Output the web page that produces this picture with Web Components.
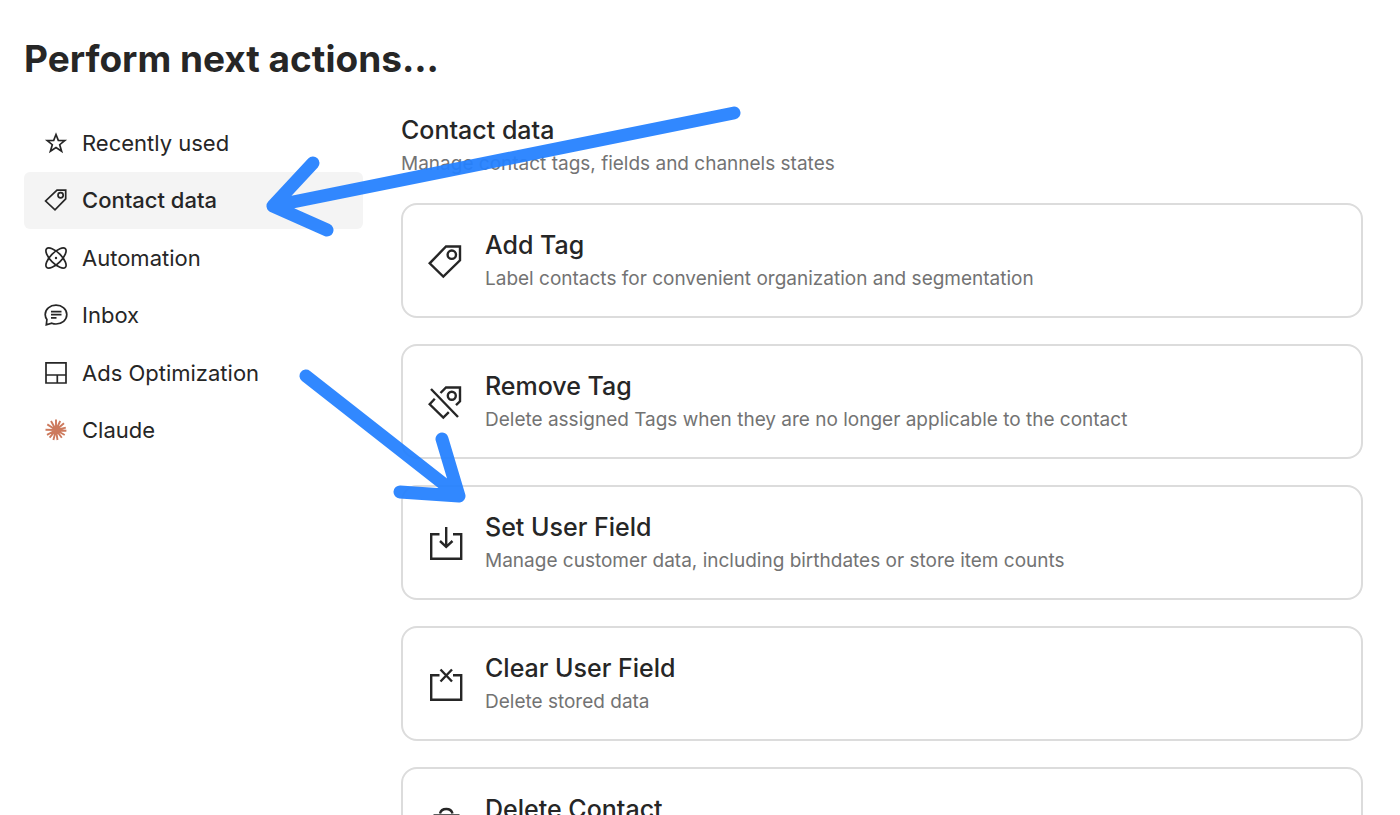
<!DOCTYPE html>
<html lang="en">
<head>
<meta charset="utf-8">
<meta name="viewport" content="width=device-width, initial-scale=1">
<title>Perform next actions</title>
<style>
    body {
        margin: 0;
        background: #fff;
        color: #262626;
        font-family: Inter, "Liberation Sans", sans-serif;
    }
</style>
</head>
<body>
<action-picker heading="Perform next actions...">
    <nav-item slot="nav" icon="star">Recently used</nav-item>
    <nav-item slot="nav" icon="tag" active>Contact data</nav-item>
    <nav-item slot="nav" icon="atom">Automation</nav-item>
    <nav-item slot="nav" icon="chat">Inbox</nav-item>
    <nav-item slot="nav" icon="layout">Ads Optimization</nav-item>
    <nav-item slot="nav" icon="burst">Claude</nav-item>

    <action-group heading="Contact data" text="Manage contact tags, fields and channels states">
        <action-card icon="tag" heading="Add Tag">Label contacts for convenient organization and segmentation</action-card>
        <action-card icon="untag" heading="Remove Tag">Delete assigned Tags when they are no longer applicable to the contact</action-card>
        <action-card icon="set" heading="Set User Field">Manage customer data, including birthdates or store item counts</action-card>
        <action-card icon="clear" heading="Clear User Field">Delete stored data</action-card>
        <action-card icon="trash" heading="Delete Contact"></action-card>
    </action-group>

    <arrow-mark slot="marks" points="M734 113L273 206M313 163L273 206L327 230"></arrow-mark>
    <arrow-mark slot="marks" points="M306 376L459 496M442 439L459 496L400 492"></arrow-mark>
</action-picker>

<script>
"use strict"

// nav icons are drawn on a 24 grid, card icons on a 36 grid
const ICONS = {
    star: '<path d="M12 3.500l2.300 5.900 6.500.200-5.100 4.100 1.900 6.500L12 16.500l-5.600 3.700 1.900-6.500-5.100-4.100 6.500-.200z"/>',
    tag: '<path d="M13 2.200h8.700v8.700L11 21.800 1.600 13z"/><circle cx="16.600" cy="7.200" r="2.600"/>',
    atom: '<ellipse cx="12" cy="12" rx="13.200" ry="5.400" transform="rotate(45 12 12)"/><ellipse cx="12" cy="12" rx="13.200" ry="5.400" transform="rotate(-45 12 12)"/><circle cx="12" cy="12" r="1.200" fill="currentColor" stroke="none"/>',
    chat: '<path d="M2.300 21.800l.6-5.200A9.300 9.300 0 0 1 1.200 11.600C1.200 6.200 6 2.200 12 2.200s10.800 4 10.800 9.400S18 21 12 21c-1.500 0-3-.3-4.200-.8z"/><path d="M7 8.600h10.500M7 11.700h10.500M7 14.800h5.500"/>',
    layout: '<path d="M2 1.800h20v20.200H2zM2 14h20M13.300 14v8"/>',
    burst: '<path stroke="#cd7a5d" stroke-width="1.900" d="M12 12V1.500M12 12l4.200-9M12 12l8-6.800M12 12l9.800-2.400M12 12l10.400.8M12 12l8.700 5M12 12l5.800 7.800M12 12l1.500 10M12 12l-2.600 10M12 12l-6.400 7.700M12 12l-9 4.800M12 12l-10.500-.3M12 12L3.300 6.400M12 12L7 3"/>',
    bigTag: '<path d="M19 3.500h14v13.800L16.300 33.500 2.700 20.300z"/><circle cx="24.800" cy="11.700" r="4.200"/>',
    untag: '<path d="M13.500 9L19 3.500h14v13.800L29 21.200M7.800 14.800l-5.100 5.500 13.600 13.200 5.500-5.400M4 5l27 28"/><circle cx="24.800" cy="11.700" r="4"/>',
    set: '<path d="M12.500 9.200H4.200v24.600h30V9.200H26M19.200 2v19.500M13 16l6.200 5.800L25.500 16"/>',
    clear: '<path d="M12.500 9.200H4.200v24.600h30V9.200H26M13.500 3.500l11.500 12M25 3.500l-11.500 12"/>',
    trash: '<path d="M13 6.500c1.500-6 11-6 12.500 0M6.500 8.500h26M9.500 8.500V33h20V8.500M16 15v12M23 15v12"/>'
};

const icon = (name, box, weight) => `
    <svg viewBox="0 0 ${box} ${box}" width="${box}" height="${box}" fill="none"
         stroke="currentColor" stroke-width="${weight}" aria-hidden="true">${ICONS[name]}</svg>`;

class ActionPicker extends HTMLElement{
    constructor(){
        super();
        this.attachShadow({mode: "open"});
    }

    connectedCallback(){
        this.shadowRoot.innerHTML = `${this.render()} ${this.styles()}`;
    }

    render(){
        return `
            <h1>${this.getAttribute('heading')}</h1>
            <div class="columns">
                <nav aria-label="Action categories"><slot name="nav"></slot></nav>
                <main><slot></slot></main>
            </div>
            <slot name="marks"></slot>
        `
    }

    styles(){
        return `
        <style>
        :host{
            display: block;
            position: relative;
            box-sizing: border-box;
            height: 100vh;
            overflow: hidden;
            padding: 36px 37px 0 24px;
        }

        h1{
            margin: 0 0 32px;
            font-size: 37px;
            font-weight: 700;
            line-height: 46px;
        }

        .columns{
            display: grid;
            grid-template-columns: 339px minmax(0, 1fr);
            align-items: start;
            column-gap: 38px;
        }

        /* six equal rows */
        nav{
            display: grid;
            grid-auto-rows: 1fr;
            min-height: 345px;
        }
        </style>
        `
    }
}

class NavItem extends HTMLElement{
    constructor(){
        super();
        this.attachShadow({mode: "open"});
    }

    connectedCallback(){
        this.shadowRoot.innerHTML = `${this.render()} ${this.styles()}`;
    }

    render(){
        const current = this.hasAttribute('active') ? 'aria-current="true"' : '';
        return `
            <button type="button" ${current}>
                ${icon(this.getAttribute('icon'), 24, 1.7)}
                <span><slot></slot></span>
            </button>
        `
    }

    styles(){
        return `
        <style>
        :host{
            display: flex;
        }

        button{
            flex: 1;
            display: flex;
            align-items: center;
            gap: 14px;
            padding: 0 20px;
            border: 0;
            border-radius: 6px;
            background: none;
            color: inherit;
            font: inherit;
            font-size: 22px;
            line-height: 32px;
            text-align: left;
            cursor: pointer;
        }

        :host([active]) button{
            background: #f4f4f4;
            font-weight: 500;
        }

        svg{
            flex: none;
        }
        </style>
        `
    }
}

class ActionGroup extends HTMLElement{
    constructor(){
        super();
        this.attachShadow({mode: "open"});
    }

    connectedCallback(){
        this.shadowRoot.innerHTML = `${this.render()} ${this.styles()}`;
    }

    render(){
        return `
            <header>
                <h2>${this.getAttribute('heading')}</h2>
                <p>${this.getAttribute('text')}</p>
            </header>
            <slot></slot>
        `
    }

    styles(){
        return `
        <style>
        :host{
            display: flex;
            flex-direction: column;
            gap: 26px;
        }

        h2, p{
            margin: 0;
        }

        h2{
            font-size: 25px;
            font-weight: 500;
            line-height: 32px;
        }

        p{
            margin-top: 5px;
            color: #737373;
            font-size: 19px;
            line-height: 26px;
        }
        </style>
        `
    }
}

class ActionCard extends HTMLElement{
    constructor(){
        super();
        this.attachShadow({mode: "open"});
    }

    connectedCallback(){
        this.shadowRoot.innerHTML = `${this.render()} ${this.styles()}`;
    }

    render(){
        const name = this.getAttribute('icon');
        return `
            <button type="button">
                ${icon(name === 'tag' ? 'bigTag' : name, 36, 2.4)}
                <span class="text">
                    <span class="title">${this.getAttribute('heading')}</span>
                    <span class="note"><slot></slot></span>
                </span>
            </button>
        `
    }

    styles(){
        return `
        <style>
        :host{
            display: block;
        }

        button{
            display: flex;
            align-items: center;
            gap: 22px;
            width: 100%;
            padding: 24px;
            border: 2px solid #dcdcdc;
            border-radius: 16px;
            background: #fff;
            color: inherit;
            font: inherit;
            text-align: left;
            cursor: pointer;
        }

        svg{
            flex: none;
        }

        .text{
            display: flex;
            flex-direction: column;
            gap: 5px;
        }

        .title{
            font-size: 25px;
            font-weight: 500;
            line-height: 32px;
        }

        .note{
            min-height: 26px;
            color: #737373;
            font-size: 19px;
            line-height: 26px;
        }
        </style>
        `
    }
}

// hand-drawn pointer laid over the page
class ArrowMark extends HTMLElement{
    constructor(){
        super();
        this.attachShadow({mode: "open"});
    }

    connectedCallback(){
        this.shadowRoot.innerHTML = `
            <svg width="100%" height="100%" aria-hidden="true"><path d="${this.getAttribute('points')}"/></svg>
            <style>
            :host{
                position: absolute;
                inset: 0;
                pointer-events: none;
            }

            svg{
                display: block;
                opacity: .94;
            }

            path{
                fill: none;
                stroke: #2581ff;
                stroke-width: 13px;
                stroke-linecap: round;
                stroke-linejoin: round;
            }
            </style>
        `;
    }
}

customElements.define('action-picker', ActionPicker);
customElements.define('nav-item', NavItem);
customElements.define('action-group', ActionGroup);
customElements.define('action-card', ActionCard);
customElements.define('arrow-mark', ArrowMark);
</script>
</body>
</html>
